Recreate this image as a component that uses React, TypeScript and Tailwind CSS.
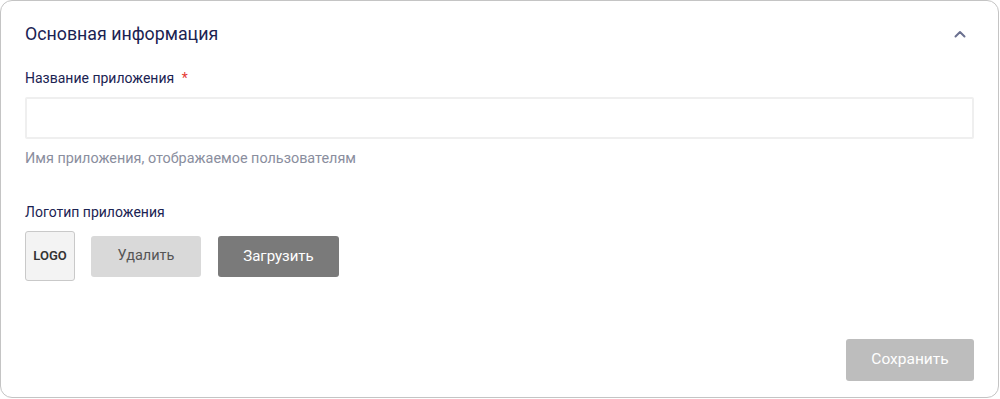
export default function App() {
  return (
    <div className="h-[399px] w-[1000px] bg-white font-['Roboto',sans-serif]">
      <div className="flex h-[398px] w-[999px] flex-col rounded-[12px] border border-[#c4c4c4] px-6 pt-[20px] pb-4">
        {/* Header */}
        <div className="flex items-center justify-between">
          <h2 className="text-[17.8px] leading-[26px] text-[#1b2352]">Основная информация</h2>
          <svg width="14" height="14" viewBox="0 0 14 14" className="mr-[7px]">
            <path d="M2.5 9.5 L7 5 L11.5 9.5" fill="none" stroke="#6b7190" strokeWidth="2" strokeLinecap="round" strokeLinejoin="round" />
          </svg>
        </div>

        {/* App name */}
        <label className="mt-[21px] text-[14px] leading-[20px] text-[#1b2352]">
          Название приложения <span className="ml-[4px] text-[#e53935]">*</span>
        </label>
        <input className="mt-[9px] h-[42px] w-full rounded-[2px] border-2 border-[#efefef] px-3 text-[14px] outline-none" />
        <p className="mt-[10px] text-[14.4px] leading-[20px] text-[#8a8e9e]">Имя приложения, отображаемое пользователям</p>

        {/* Logo */}
        <label className="mt-[33px] text-[14px] leading-[20px] text-[#1b2352]">Логотип приложения</label>
        <div className="mt-[9px] flex items-center">
          <div className="flex h-[50px] w-[50px] items-center justify-center rounded-[3px] border border-[#c9c9c9] bg-[#f3f3f3] text-[13px] font-semibold text-[#333]">
            LOGO
          </div>
          <button className="ml-[16px] h-[41px] w-[110px] rounded-[3px] bg-[#d9d9d9] text-[14.5px] text-[#555]">Удалить</button>
          <button className="ml-[17px] h-[41px] w-[121px] rounded-[3px] bg-[#7a7a7a] text-[15px] text-white">Загрузить</button>
        </div>

        {/* Footer */}
        <div className="mt-auto flex justify-end">
          <button className="h-[42px] w-[128px] rounded-[3px] bg-[#bdbdbd] text-[15.5px] text-white">Сохранить</button>
        </div>
      </div>
    </div>
  );
}
